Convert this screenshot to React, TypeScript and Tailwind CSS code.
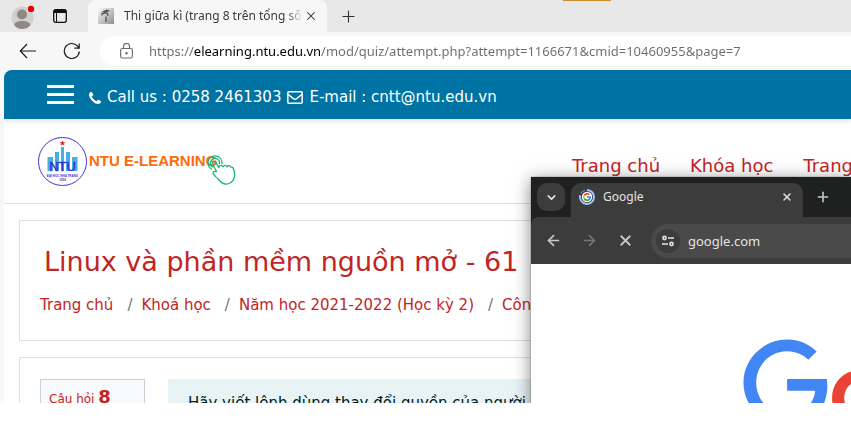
import React from "react";
import { Plus, X, ArrowLeft, ArrowRight, ChevronDown } from "lucide-react";

const ui = "font-['Noto_Sans','Open_Sans',sans-serif]";
const site = "font-['DejaVu_Sans',sans-serif]";

function Avatar() {
  return (
    <svg width="24" height="24" viewBox="0 0 24 24" aria-hidden="true">
      <circle cx="11.500" cy="12.500" r="11" fill="#d3d0cc" />
      <circle cx="11" cy="9.500" r="5" fill="#8d8985" />
      <path d="M3 20.300c.6-3 4-4.300 8.200-4.300s7.600 1.300 8.400 4.300a11 11 0 0 1-16.600 0z" fill="#8d8985" />
      <circle cx="20" cy="4" r="4" fill="#e8e8e8" />
      <circle cx="20" cy="4" r="3.200" fill="#e60000" />
    </svg>
  );
}

function EdgeTabs() {
  return (
    <div className="flex h-8 items-stretch bg-[#e8e8e8]">
      <div className="flex w-[88px] shrink-0 items-center gap-[18px] bg-[#e8e8e8] pl-[11px]">
        <button aria-label="Profile" className="pt-px"><Avatar /></button>
        <button aria-label="Tab actions">
          <svg width="14" height="14" viewBox="0 0 14 14" aria-hidden="true">
            <rect x="0.700" y="0.700" width="12.600" height="12.600" rx="2" fill="none" stroke="#111" strokeWidth="1.300" />
            <path d="M1 1h12v3H1z" fill="#111" />
            <path d="M3.500 4v9" stroke="#111" strokeWidth="1" />
          </svg>
        </button>
      </div>
      <div className="flex w-[239px] shrink-0 items-center rounded-t-lg bg-[#f7f7f7] pl-[10px] pr-[9px]">
        <svg width="16" height="16" viewBox="0 0 16 16" className="shrink-0" aria-hidden="true">
          <defs>
            <linearGradient id="fav" x1="0" y1="0" x2="1" y2="1">
              <stop offset="0" stopColor="#fafafa" />
              <stop offset="1" stopColor="#8f8f8f" />
            </linearGradient>
          </defs>
          <rect width="16" height="16" fill="url(#fav)" />
          <path d="M4 3.500L9 1.500l3 1.500-5 2z" fill="#555" />
          <path d="M5 6c1-1.200 3-1.200 4.500-.5L10 8M4 4.500v3M8 8.500V14" stroke="#4b4b4b" strokeWidth="1.200" fill="none" />
        </svg>
        <span className={`ml-[10px] w-[179px] overflow-hidden whitespace-nowrap text-[12px] leading-5 text-[#3b3b3b] [mask-image:linear-gradient(90deg,#000_162px,transparent_179px)] ${ui}`}>
          Thi giữa kì (trang 8 trên tổng số 3
        </span>
        <button aria-label="Close tab" className="ml-auto text-[#333]">
          <X size={14} strokeWidth={1.800} />
        </button>
      </div>
      <button aria-label="New tab" className="ml-3 text-[#333]">
        <Plus size={19} strokeWidth={1.400} />
      </button>
      <span className="ml-[205px] h-px w-12 bg-[#cf8a2b]" />
    </div>
  );
}

function EdgeToolbar() {
  return (
    <div className="flex h-[38px] items-center bg-[#f7f7f7] pl-[19px]">
      <button aria-label="Back" className="text-[#1b1b1b]">
        <svg width="18" height="18" viewBox="0 0 18 18" fill="none" stroke="currentColor" strokeWidth="1.200" aria-hidden="true">
          <path d="M17 9H1.500M8 2L1.300 9 8 16" />
        </svg>
      </button>
      <button aria-label="Refresh" className="ml-[26px] text-[#1b1b1b]">
        <svg width="18" height="18" viewBox="0 0 18 18" fill="none" stroke="currentColor" strokeWidth="1.200" aria-hidden="true">
          <path d="M16.300 9.500A7.500 7.500 0 1 1 14.600 4.200L16 6M16.200 1.500v4.700h-4.700" />
        </svg>
      </button>
      <div className="ml-[19px] flex h-[30px] min-w-0 flex-1 items-center rounded-l-full bg-white pl-5">
        <svg width="13" height="16" viewBox="0 0 13 16" fill="none" stroke="#6a6a6a" strokeWidth="1.100" aria-hidden="true">
          <rect x="0.600" y="5.500" width="11.800" height="9.500" rx="1.800" />
          <path d="M3.500 5.500V3.500a3 3 0 0 1 6 0v2" />
          <circle cx="6.500" cy="10.300" r="0.700" fill="#6a6a6a" />
        </svg>
        <input
          aria-label="Address"
          readOnly
          defaultValue="https://elearning.ntu.edu.vn/mod/quiz/attempt.php?attempt=1166671&cmid=10460955&page=7"
          className={`ml-4 h-6 min-w-0 flex-1 bg-[linear-gradient(90deg,#6c6c6c_45px,#000_45px,#000_171px,#6c6c6c_171px)] bg-clip-text text-[13px] text-transparent outline-none ${ui}`}
        />
      </div>
    </div>
  );
}

function PhoneIcon() {
  return (
    <svg width="12" height="12" viewBox="0 0 1408 1408" fill="currentColor" aria-hidden="true">
      <path d="M1408 1112q0 27-10 70.500t-21 68.500q-21 50-122 106-94 51-186 51-27 0-53-3.500t-57.500-12.500-47-14.500-55.500-20.500-49-18q-98-35-175-83-127-79-264-216t-216-264q-48-77-83-175-3-9-18-49t-20.500-55.500-14.500-47-12.500-57.500-3.500-53q0-92 51-186 56-101 106-122 25-11 68.500-21t70.500-10q14 0 21 3 18 6 53 76 11 19 30 54t35 63.500 31 53.500q3 4 17.500 25t21.500 35.500 7 28.500q0 20-28.500 50t-62 55-62 53-28.500 46q0 9 5 22.500t8.500 20.500 14 24 11.500 19q76 137 174 235t235 174q2 1 19 11.500t24 14 20.500 8.500 22.500 5q18 0 46-28.500t53-62 55-62 50-28.500q14 0 28.500 7t35.500 21.500 25 17.500q25 15 53.500 31t63.500 35 54 30q70 35 76 53 3 7 3 21z" />
    </svg>
  );
}

function EnvelopeIcon() {
  return (
    <svg width="16" height="13" viewBox="0 0 16 13" fill="none" stroke="currentColor" strokeWidth="1.500" aria-hidden="true">
      <rect x="0.800" y="0.800" width="14.400" height="11.400" rx="1" />
      <path d="M1 3.300l5.300 4.200c1.100.9 2.300.9 3.400 0L15 3.300" />
    </svg>
  );
}

function SiteLogo() {
  return (
    <svg width="200" height="50" viewBox="0 0 200 50" className="mt-[2px] shrink-0" role="img" aria-label="NTU E-Learning">
      <circle cx="24.500" cy="24.500" r="24" fill="#fff" stroke="#4a2fd0" strokeWidth="1" />
      <path d="M24.500 4l.7 1.600h1.700l-1.400 1 .6 1.700-1.600-1-1.600 1 .6-1.700-1.400-1h1.700z" fill="#e02020" stroke="#e02020" strokeWidth=".5" />
      <path d="M9.500 20h5.500v14H9.500zM17 15h4v19h-4zM23 10h3v24h-3zM28 15h4v19h-4zM34 20h5.500v14H34z" fill="#45b0e3" />
      <text x="24.500" y="34" textAnchor="middle" className="fill-[#3a2bd6] font-['Liberation_Sans',sans-serif] text-[13px]" stroke="#3a2bd6" strokeWidth=".4">NTU</text>
      <text x="24.500" y="39.500" textAnchor="middle" className="fill-[#4a2fd0] font-['Liberation_Sans',sans-serif] text-[3px] font-bold">ĐẠI HỌC NHA TRANG</text>
      <text x="24.500" y="43.500" textAnchor="middle" className="fill-[#4a2fd0] font-['Liberation_Sans',sans-serif] text-[3px] font-bold">1959</text>
      <text x="51" y="29" className="fill-[#ff6a0a] font-['Liberation_Sans',sans-serif] text-[15px] font-bold">NTU E-LEARNING</text>
      <g fill="none" stroke="#17b57b" strokeWidth="1.300" strokeLinecap="round" strokeLinejoin="round">
        <path d="M178.500 34.500l-3.700-7.300c-.8-2.200 2-3.600 3.200-1.600l2.800 5c.5-2.600 3-3 4.200-.8 1-1.900 3.300-1.900 4 0 1.100-1.700 3.300-1.300 3.900.4 1.700-.4 2.700.9 3 2.800.7 2.700 1.500 5.300.2 8.200-1.300 3.800-5 6.300-9 5.800-3.300-.4-5-2.500-7.300-5.300-1.300-1.700-5.300-4-4.800-6 .5-1.800 2.300-1.500 3.500-1.200z" />
        <path d="M175 30a4.500 4.500 0 1 1 6.500-3.500" />
        <path d="M173.500 32a7 7 0 1 1 10.500-5.500" />
      </g>
    </svg>
  );
}

function Card({ className, children }: { className: string; children: React.ReactNode }) {
  return <section className={`ml-[15px] mr-4 border border-[#dedede] bg-white ${className}`}>{children}</section>;
}

function Site() {
  const crumbs = ["Trang chủ", "Khoá học", "Năm học 2021-2022 (Học kỳ 2)", "Công"];
  return (
    <div className="bg-[#f7f7f7] pl-1">
      <div className={`overflow-hidden rounded-tl-lg bg-white ${site}`}>
        <div className="relative flex h-[49px] items-center bg-[#0073a5] pl-[43px] text-[15px] text-white shadow-[0_2px_5px_rgba(0,0,0,0.12)]">
          <button aria-label="Menu" className="flex w-[27px] flex-col gap-[5px]">
            <span className="h-[3px] bg-white" />
            <span className="h-[3px] bg-white" />
            <span className="h-[3px] bg-white" />
          </button>
          <p className="ml-[15px] flex items-center gap-[6px] whitespace-nowrap pt-[6px]">
            <PhoneIcon />
            <span>Call us : 0258 2461303</span>
            <EnvelopeIcon />
            <span>E-mail : cntt@ntu.edu.vn</span>
          </p>
        </div>
        <header className="flex h-[85px] items-center border-b border-[#dedede] pl-[34px]">
          <SiteLogo />
          <nav className="ml-[334px] flex gap-[30px] whitespace-nowrap pt-2 text-[18px] text-[#c22424]">
            <a href="#home">Trang chủ</a>
            <a href="#courses">Khóa học</a>
            <a href="#pages">Trang</a>
          </nav>
        </header>
        <Card className="mt-4 h-[121px] overflow-hidden pt-[23px] text-[#c22424]">
          <h1 className="whitespace-nowrap pl-6 text-[27px] leading-9">Linux và phần mềm nguồn mở - 61</h1>
          <ol className="mt-[13px] flex whitespace-nowrap pl-5 text-[15px] leading-6">
            {crumbs.map((c, i) => (
              <li key={c} className="flex">
                {i > 0 && <span className="pl-[14px] pr-[9px] text-[#6c757d]">/</span>}
                <a href="#crumb">{c}</a>
              </li>
            ))}
          </ol>
        </Card>
        <Card className="mt-4 flex items-start pl-5 pt-[21px]">
          <div className="h-20 w-[105px] shrink-0 border border-[#cad0d7] bg-[#f8f9fa] pl-2 pt-[3px] text-[12px] text-[#c22424]">
            Câu hỏi <b className="text-[18px]">8</b>
          </div>
          <div className="ml-[23px] mr-5 h-20 flex-1 bg-[#e7f3f5] pl-5 pt-[13px] text-[15px] text-[#001a1e]">
            Hãy viết lệnh dùng thay đổi quyền của người
          </div>
        </Card>
      </div>
    </div>
  );
}

function GoogleFavicon() {
  return (
    <svg width="16" height="16" viewBox="0 0 16 16" fill="none" aria-hidden="true">
      <path d="M8 1a7 7 0 1 1-6.800 5.300" stroke="#a8c7fa" strokeWidth="1.900" />
      <path d="M2 4.500A7 7 0 0 1 6 1.300" stroke="#6f8cb8" strokeWidth="1.200" />
      <circle cx="8" cy="8" r="5.200" fill="#fff" />
      <g strokeWidth="1.700">
        <path d="M10.300 5.700A3.200 3.200 0 0 0 5.200 6.500" stroke="#ea4335" />
        <path d="M5.200 6.400a3.200 3.200 0 0 0 0 3.200" stroke="#fbbc05" />
        <path d="M5.200 9.500a3.200 3.200 0 0 0 4.900 1" stroke="#34a853" />
        <path d="M10.100 10.500A3.200 3.200 0 0 0 11.200 8H8" stroke="#4285f4" />
      </g>
    </svg>
  );
}

function ChromeWindow() {
  return (
    <div className={`absolute left-[531px] right-0 top-[177px] h-80 bg-white shadow-[0_3px_16px_rgba(0,0,0,0.5)] ring-1 ring-black/10 ${ui}`}>
      <div className="bg-[#1f2120]">
        <div className="flex h-10 pl-[6px] pt-[6px]">
          <button aria-label="Search tabs" className="grid size-7 place-items-center rounded-[10px] bg-[#3c3c3c] text-[#e3e3e3]">
            <ChevronDown size={13} strokeWidth={3} />
          </button>
          <div className="ml-[6px] flex w-[232px] items-center rounded-t-[10px] bg-[#3c3c3c] pb-[6px] pl-2 pr-[10px] text-[12px] text-[#e3e3e3]">
            <GoogleFavicon />
            <span className="ml-2">Google</span>
            <button aria-label="Close tab" className="ml-auto"><X size={12} strokeWidth={3} /></button>
          </div>
          <button aria-label="New tab" className="ml-3 pb-[6px] text-[#c7c7c7]"><Plus size={16} strokeWidth={2.400} /></button>
        </div>
        <div className="flex h-[47px] items-center rounded-tl-lg bg-[#3c3c3c] pl-[14px] text-[#c7c7c7]">
          <button aria-label="Back"><ArrowLeft size={17} strokeWidth={2.400} /></button>
          <button aria-label="Forward" className="ml-[19px] text-[#757575]"><ArrowRight size={17} strokeWidth={2.400} /></button>
          <button aria-label="Stop" className="ml-[19px]"><X size={17} strokeWidth={2.600} /></button>
          <div className="ml-[17px] flex h-[34px] min-w-0 flex-1 items-center rounded-l-full bg-[#4a4a4a] pl-[5px]">
            <button aria-label="Site information" className="grid size-6 shrink-0 place-items-center rounded-full bg-[#3c3c3c] text-[#e3e3e3]">
              <svg width="14" height="14" viewBox="0 0 14 14" fill="none" stroke="currentColor" strokeWidth="1.600" aria-hidden="true">
                <circle cx="3.500" cy="4" r="1.600" />
                <path d="M7 4h6M1 10h6" />
                <circle cx="10.500" cy="10" r="1.600" />
              </svg>
            </button>
            <input aria-label="Search or type a URL" readOnly defaultValue="google.com" className="ml-2 h-6 min-w-0 flex-1 bg-transparent text-[13px] text-[#e3e3e3] outline-none" />
          </div>
        </div>
      </div>
      <svg width="340" height="115" viewBox="0 0 272 92" className="ml-[212px] mt-[75px] max-w-none" role="img" aria-label="Google">
        <path fill="#4285f4" d="M35.290 41.410V32H67c.31 1.640.47 3.580.47 5.680 0 7.060-1.930 15.790-8.150 22.010-6.050 6.300-13.780 9.660-24.020 9.660C16.320 69.350.36 53.890.36 34.910.36 15.930 16.320.47 35.300.47c10.500 0 17.980 4.120 23.600 9.490l-6.640 6.640c-4.030-3.780-9.490-6.720-16.970-6.720-13.860 0-24.700 11.170-24.700 25.030 0 13.860 10.840 25.030 24.700 25.030 8.990 0 14.110-3.610 17.390-6.890 2.660-2.660 4.410-6.460 5.100-11.650l-22.490.01z" />
        <path fill="#ea4335" d="M115.750 47.180c0 12.770-9.990 22.180-22.250 22.180s-22.250-9.410-22.250-22.180C71.250 34.320 81.240 25 93.500 25s22.250 9.320 22.250 22.180zm-9.740 0c0-7.980-5.790-13.440-12.510-13.440S80.990 39.200 80.990 47.180c0 7.900 5.790 13.440 12.510 13.440s12.510-5.550 12.510-13.440z" />
      </svg>
    </div>
  );
}

export default function App() {
  return (
    <main className="min-h-screen bg-white">
      <div className="relative h-[403px] overflow-hidden">
        <EdgeTabs />
        <EdgeToolbar />
        <Site />
        <ChromeWindow />
      </div>
    </main>
  );
}
